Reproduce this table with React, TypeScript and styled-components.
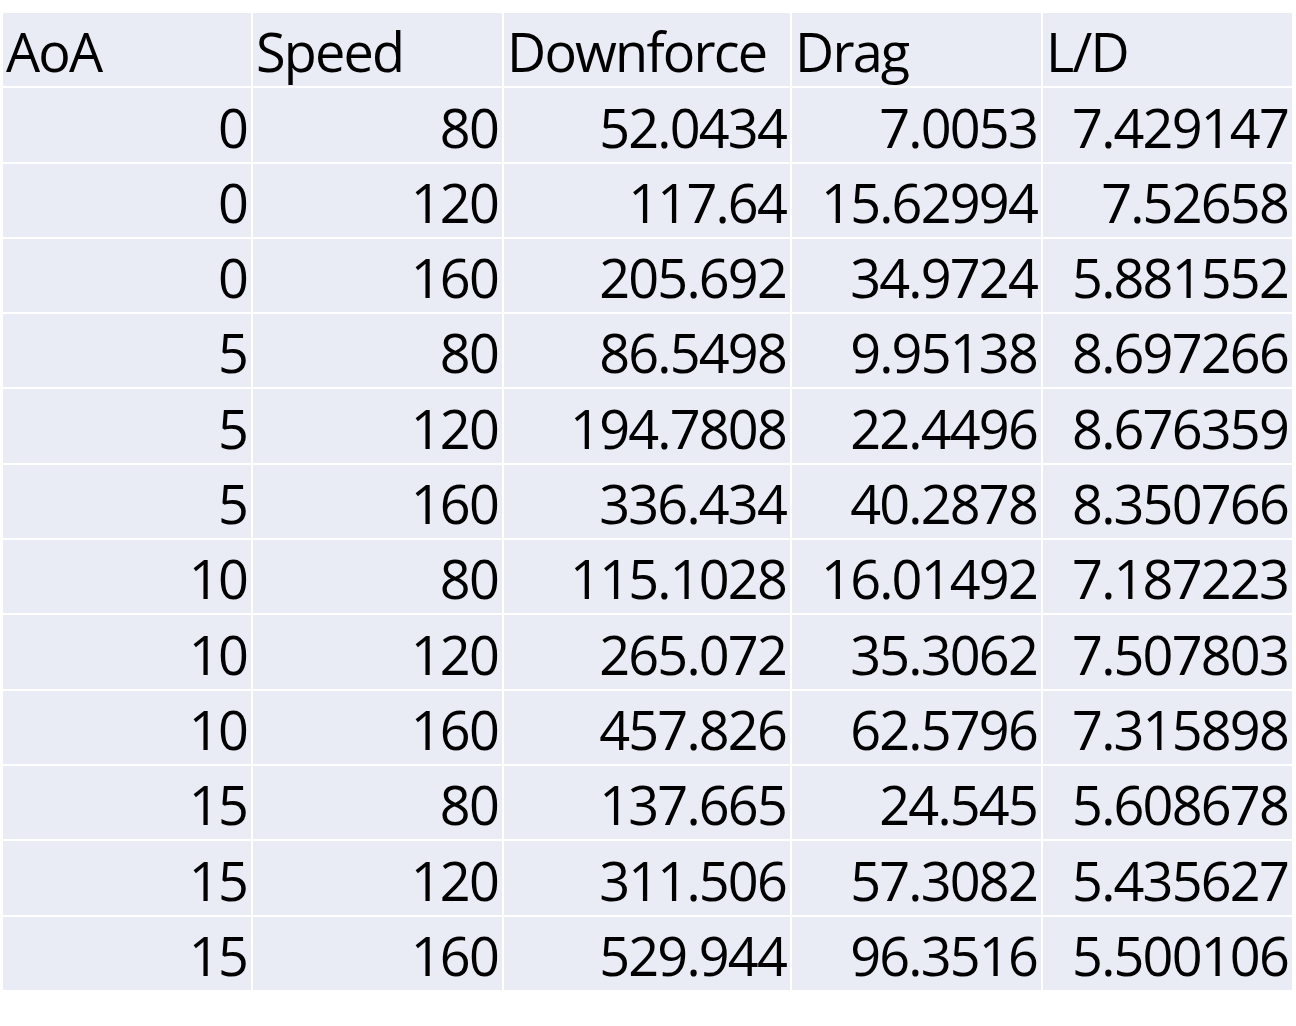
import React from "react";
import styled, { createGlobalStyle } from "styled-components";

const Global = createGlobalStyle`
  html, body { margin: 0; padding: 0; background: #ffffff; }
  body { font-family: "Open Sans", "Noto Sans", sans-serif; }
`;

const Page = styled.div`
  padding: 13px 0 0 3px;
`;

const Table = styled.div`
  display: grid;
  grid-template-columns: 248px 249px 286px 249px 249px;
  grid-auto-rows: 73.3px;
  gap: 2px;
  width: max-content;
  background: #ffffff;
`;

const Cell = styled.div<{ $align: "left" | "right" }>`
  background: #e9ebf5;
  display: flex;
  align-items: flex-end;
  justify-content: ${(p) => (p.$align === "right" ? "flex-end" : "flex-start")};
  padding: 0 4px 3px 3px;
  box-sizing: border-box;
  font-family: "Open Sans", "Noto Sans", sans-serif;
  font-size: 54px;
  line-height: 64px;
  letter-spacing: -1.8px;
  color: #000000;
  white-space: nowrap;
`;

const headers = ["AoA", "Speed", "Downforce", "Drag", "L/D"];

const rows: string[][] = [
  ["0", "80", "52.0434", "7.0053", "7.429147"],
  ["0", "120", "117.64", "15.62994", "7.52658"],
  ["0", "160", "205.692", "34.9724", "5.881552"],
  ["5", "80", "86.5498", "9.95138", "8.697266"],
  ["5", "120", "194.7808", "22.4496", "8.676359"],
  ["5", "160", "336.434", "40.2878", "8.350766"],
  ["10", "80", "115.1028", "16.01492", "7.187223"],
  ["10", "120", "265.072", "35.3062", "7.507803"],
  ["10", "160", "457.826", "62.5796", "7.315898"],
  ["15", "80", "137.665", "24.545", "5.608678"],
  ["15", "120", "311.506", "57.3082", "5.435627"],
  ["15", "160", "529.944", "96.3516", "5.500106"],
];

export default function App() {
  return (
    <>
      <Global />
      <Page>
        <Table>
          {headers.map((h) => (
            <Cell key={h} $align="left">
              {h}
            </Cell>
          ))}
          {rows.map((r, i) =>
            r.map((v, j) => (
              <Cell key={`${i}-${j}`} $align="right">
                {v}
              </Cell>
            ))
          )}
        </Table>
      </Page>
    </>
  );
}
